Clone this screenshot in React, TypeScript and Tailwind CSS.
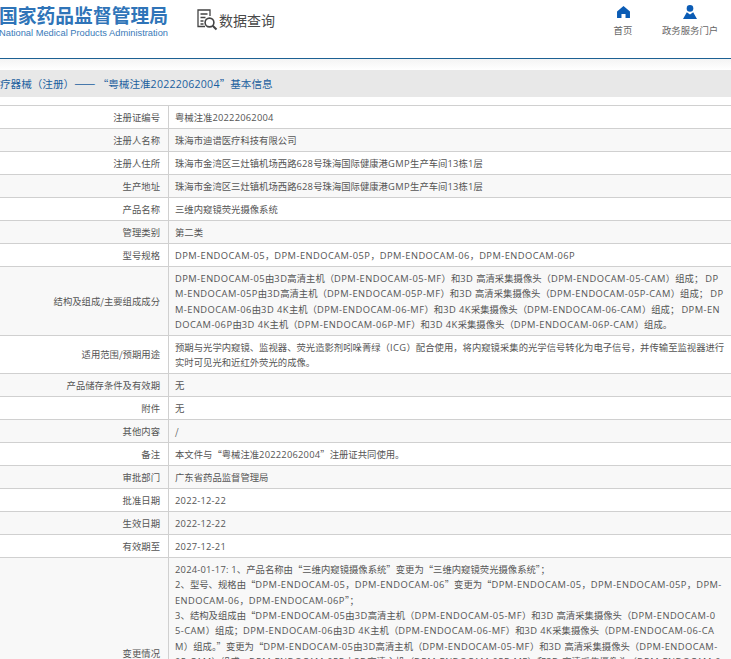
import { Fragment } from "react";

type Row = { k: string; v: string[] };

const rows: Row[] = [
  { k: "注册证编号", v: ["粤械注准20222062004"] },
  { k: "注册人名称", v: ["珠海市迪谱医疗科技有限公司"] },
  { k: "注册人住所", v: ["珠海市金湾区三灶镇机场西路628号珠海国际健康港GMP生产车间13栋1层"] },
  { k: "生产地址", v: ["珠海市金湾区三灶镇机场西路628号珠海国际健康港GMP生产车间13栋1层"] },
  { k: "产品名称", v: ["三维内窥镜荧光摄像系统"] },
  { k: "管理类别", v: ["第二类"] },
  { k: "型号规格", v: ["DPM-ENDOCAM-05，DPM-ENDOCAM-05P，DPM-ENDOCAM-06，DPM-ENDOCAM-06P"] },
  {
    k: "结构及组成/主要组成成分",
    v: [
      "DPM-ENDOCAM-05由3D高清主机（DPM-ENDOCAM-05-MF）和3D 高清采集摄像头（DPM-ENDOCAM-05-CAM）组成； DP",
      "M-ENDOCAM-05P由3D高清主机（DPM-ENDOCAM-05P-MF）和3D 高清采集摄像头（DPM-ENDOCAM-05P-CAM）组成； DP",
      "M-ENDOCAM-06由3D 4K主机（DPM-ENDOCAM-06-MF）和3D 4K采集摄像头（DPM-ENDOCAM-06-CAM）组成； DPM-EN",
      "DOCAM-06P由3D 4K主机（DPM-ENDOCAM-06P-MF）和3D 4K采集摄像头（DPM-ENDOCAM-06P-CAM）组成。",
    ],
  },
  {
    k: "适用范围/预期用途",
    v: [
      "预期与光学内窥镜、监视器、荧光造影剂吲哚菁绿（ICG）配合使用，将内窥镜采集的光学信号转化为电子信号，并传输至监视器进行",
      "实时可见光和近红外荧光的成像。",
    ],
  },
  { k: "产品储存条件及有效期", v: ["无"] },
  { k: "附件", v: ["无"] },
  { k: "其他内容", v: ["/"] },
  { k: "备注", v: ["本文件与“粤械注准20222062004”注册证共同使用。"] },
  { k: "审批部门", v: ["广东省药品监督管理局"] },
  { k: "批准日期", v: ["2022-12-22"] },
  { k: "生效日期", v: ["2022-12-22"] },
  { k: "有效期至", v: ["2027-12-21"] },
  {
    k: "变更情况",
    v: [
      "2024-01-17: 1、产品名称由“三维内窥镜摄像系统”变更为“三维内窥镜荧光摄像系统”；",
      "2、型号、规格由“DPM-ENDOCAM-05，DPM-ENDOCAM-06”变更为“DPM-ENDOCAM-05，DPM-ENDOCAM-05P，DPM-",
      "ENDOCAM-06，DPM-ENDOCAM-06P”；",
      "3、结构及组成由“DPM-ENDOCAM-05由3D高清主机（DPM-ENDOCAM-05-MF）和3D 高清采集摄像头（DPM-ENDOCAM-0",
      "5-CAM）组成；DPM-ENDOCAM-06由3D 4K主机（DPM-ENDOCAM-06-MF）和3D 4K采集摄像头（DPM-ENDOCAM-06-CA",
      "M）组成。”变更为“DPM-ENDOCAM-05由3D高清主机（DPM-ENDOCAM-05-MF）和3D 高清采集摄像头（DPM-ENDOCAM-",
      "05-CAM）组成；DPM-ENDOCAM-05P由3D高清主机（DPM-ENDOCAM-05P-MF）和3D 高清采集摄像头（DPM-ENDOCAM-0",
      "5P-CAM）组成；DPM-ENDOCAM-06由3D 4K主机（DPM-ENDOCAM-06-MF）和3D 4K采集摄像头（DPM-ENDOCAM-06-CAM）",
      "组成；DPM-ENDOCAM-06P由3D 4K主机（DPM-ENDOCAM-06P-MF）和3D 4K采集摄像头（DPM-ENDOCAM-06P-CAM",
      "）组成。”；",
      "4、适用范围/预期用途变更。",
      "5、产品技术要求变更。",
    ],
  },
];

function Mixed({ text }: { text: string }) {
  const parts = text.split(/([A-Za-z0-9][A-Za-z0-9\-:. /]*)/);
  return (
    <>
      {parts.map((p, i) =>
        i % 2 === 1 ? (
          <span
            key={i}
            className={`font-['Open_Sans',sans-serif] ${/[A-Z]/.test(p) ? "tracking-[0.43px]" : "tracking-[0.22px]"}`}
          >
            {p}
          </span>
        ) : (
          <Fragment key={i}>{p}</Fragment>
        ),
      )}
    </>
  );
}

function HomeIcon() {
  return (
    <svg viewBox="0 0 14 13" className="h-[12px] w-[13px]" fill="#0b5cb5">
      <path d="M7 0 14 6v7H9.2V8.6H4.8V13H0V6z" />
    </svg>
  );
}

function UserIcon() {
  return (
    <svg viewBox="0 0 14 14" className="h-[14px] w-[14px]" fill="#0b5cb5">
      <circle cx="7" cy="3.4" r="3.3" />
      <path d="M3.8 7.2 7 9.4l3.2-2.2L14 14H0z" />
    </svg>
  );
}

function SearchDocIcon() {
  return (
    <svg viewBox="0 0 22 22" className="h-[22px] w-[22px]" fill="none" stroke="#444" strokeWidth="1.3">
      <path d="M9 17.5H2V1h12v6" />
      <path d="M4.5 5h7M4.5 8.5h5M4.5 12h3M4.5 15h3" />
      <circle cx="13.5" cy="13.5" r="4.4" strokeWidth="1.6" />
      <path d="m16.7 16.7 3.8 3.8" strokeWidth="2" />
    </svg>
  );
}

export default function App() {
  return (
    <div className="h-[659px] w-[731px] overflow-hidden bg-white font-['Noto_Sans_CJK_SC',sans-serif]">
      <header className="flex h-[59px] items-start border-b border-[#1d6193]">
        <div className="ml-[-1px] mt-[5px] w-[170px] shrink-0">
          <div className="whitespace-nowrap text-[18.8px] font-semibold leading-[20px] text-[#2f74b8]">国家药品监督管理局</div>
          <div className="mt-[2px] whitespace-nowrap font-['Liberation_Sans',sans-serif] text-[9.3px] leading-[12px] text-[#3a7ab8]">
            National Medical Products Administration
          </div>
        </div>
        <div className="ml-[27px] mt-[9px] flex items-center gap-[1px]">
          <SearchDocIcon />
          <span className="text-[14px] leading-[20px] text-[#4a4a4a]">数据查询</span>
        </div>
        <nav className="ml-auto flex text-[9.4px] leading-[12px] text-[#666]">
          <div className="mr-[29px] mt-[6px] flex w-[20px] flex-col items-center gap-[6px]">
            <HomeIcon />
            <span className="whitespace-nowrap">首页</span>
          </div>
          <div className="mr-[13px] mt-[5px] flex w-[56px] flex-col items-center gap-[5px]">
            <UserIcon />
            <span className="whitespace-nowrap">政务服务门户</span>
          </div>
        </nav>
      </header>
      <div className="h-[11px] bg-gradient-to-b from-[#f4f4f4] to-white" />
      <div className="flex h-[27px] items-center overflow-hidden whitespace-nowrap bg-[#e8e8e8] pt-[1px] text-[10.6px] text-[#1b5f9e]">
        <span>
          <Mixed text="疗器械（注册）" />
          <span className="text-[12.6px] leading-[12px]">——</span>
          <Mixed text=" “粤械注准20222062004”基本信息" />
        </span>
      </div>
      <div className="mt-[8px] border-t border-[#d0d0d0] text-[9.35px] leading-[15.33px] text-[#555]">
        {rows.map((r, i) => (
          <div
            key={r.k}
            className={`flex border-b border-[#d0d0d0] ${i % 2 === 1 ? "bg-[#f8f8f8]" : "bg-white"}`}
          >
            <div className="flex w-[169px] shrink-0 items-center justify-end border-r border-[#d0d0d0] pr-[8px] pt-[1px]">
              {r.k}
            </div>
            <div className="whitespace-nowrap pb-[2.66px] pl-[6px] pt-[4px]">
              {r.v.map((l) => (
                <div key={l}>
                  <Mixed text={l} />
                </div>
              ))}
            </div>
          </div>
        ))}
      </div>
    </div>
  );
}
